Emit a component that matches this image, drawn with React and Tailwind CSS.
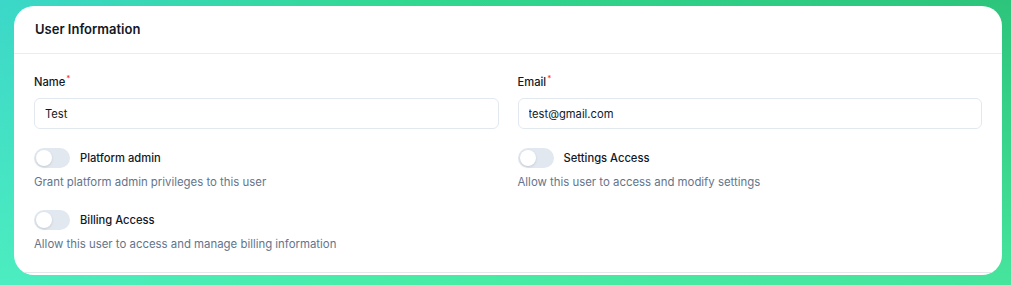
import React from 'react'

const Toggle = ({ on = false }) => (
  <button
    type="button"
    className={`relative inline-flex h-5 w-9 shrink-0 items-center rounded-full ${on ? 'bg-emerald-500' : 'bg-[#e2e8f0]'}`}
  >
    <span className={`h-4 w-4 rounded-full bg-white shadow-sm ${on ? 'translate-x-[18px]' : 'translate-x-0.5'}`} />
  </button>
)

const Field = ({ label, value }) => (
  <div className="flex flex-col">
    <label className="h-4 flex items-center text-[11.2px] font-medium text-[#111827]">
      {label}
      <span className="text-red-500 text-[8px] -mt-2 ml-px">*</span>
    </label>
    <input
      readOnly
      value={value}
      className="mt-2 h-[31px] rounded-md border border-[#e2e8f0] px-[10px] text-[11.2px] text-[#111827] outline-none"
    />
  </div>
)

const Permission = ({ title, description }) => (
  <div className="flex flex-col">
    <div className="flex items-center gap-2.5">
      <Toggle />
      <span className="text-[11.2px] font-medium text-[#111827]">{title}</span>
    </div>
    <p className="mt-[7px] h-4 flex items-center text-[11.4px] text-[#64748b]">{description}</p>
  </div>
)

export default function App() {
  return (
    <div
      className="w-[1011px] h-[285px] pt-1.5 pl-[14px] bg-[linear-gradient(to_bottom,rgba(90,255,185,0)_0%,rgba(90,255,185,0.55)_100%),linear-gradient(to_right,#3cd7c9_0%,#31d890_40%,#2dc47b_100%)]"
      style={{ fontFamily: 'Inter, "Noto Sans", sans-serif' }}
    >
      <div className="w-[988px] h-[269px] rounded-[20px] bg-white overflow-hidden">
        <div className="border-b border-[#e5e7eb]">
          <div className="h-[48px] px-[21px] flex items-center border-b border-[#e9eef3]">
            <h2 className="text-[13px] font-semibold text-[#111827]">User Information</h2>
          </div>
          <div className="px-5 pt-5 pb-[19px]">
            <div className="grid grid-cols-2 gap-x-[19px]">
              <Field label="Name" value="Test" />
              <Field label="Email" value="test@gmail.com" />
            </div>
            <div className="mt-[19px] grid grid-cols-2 gap-x-[19px] gap-y-[19px]">
              <Permission title="Platform admin" description="Grant platform admin privileges to this user" />
              <Permission title="Settings Access" description="Allow this user to access and modify settings" />
              <Permission title="Billing Access" description="Allow this user to access and manage billing information" />
            </div>
          </div>
        </div>
      </div>
    </div>
  )
}
